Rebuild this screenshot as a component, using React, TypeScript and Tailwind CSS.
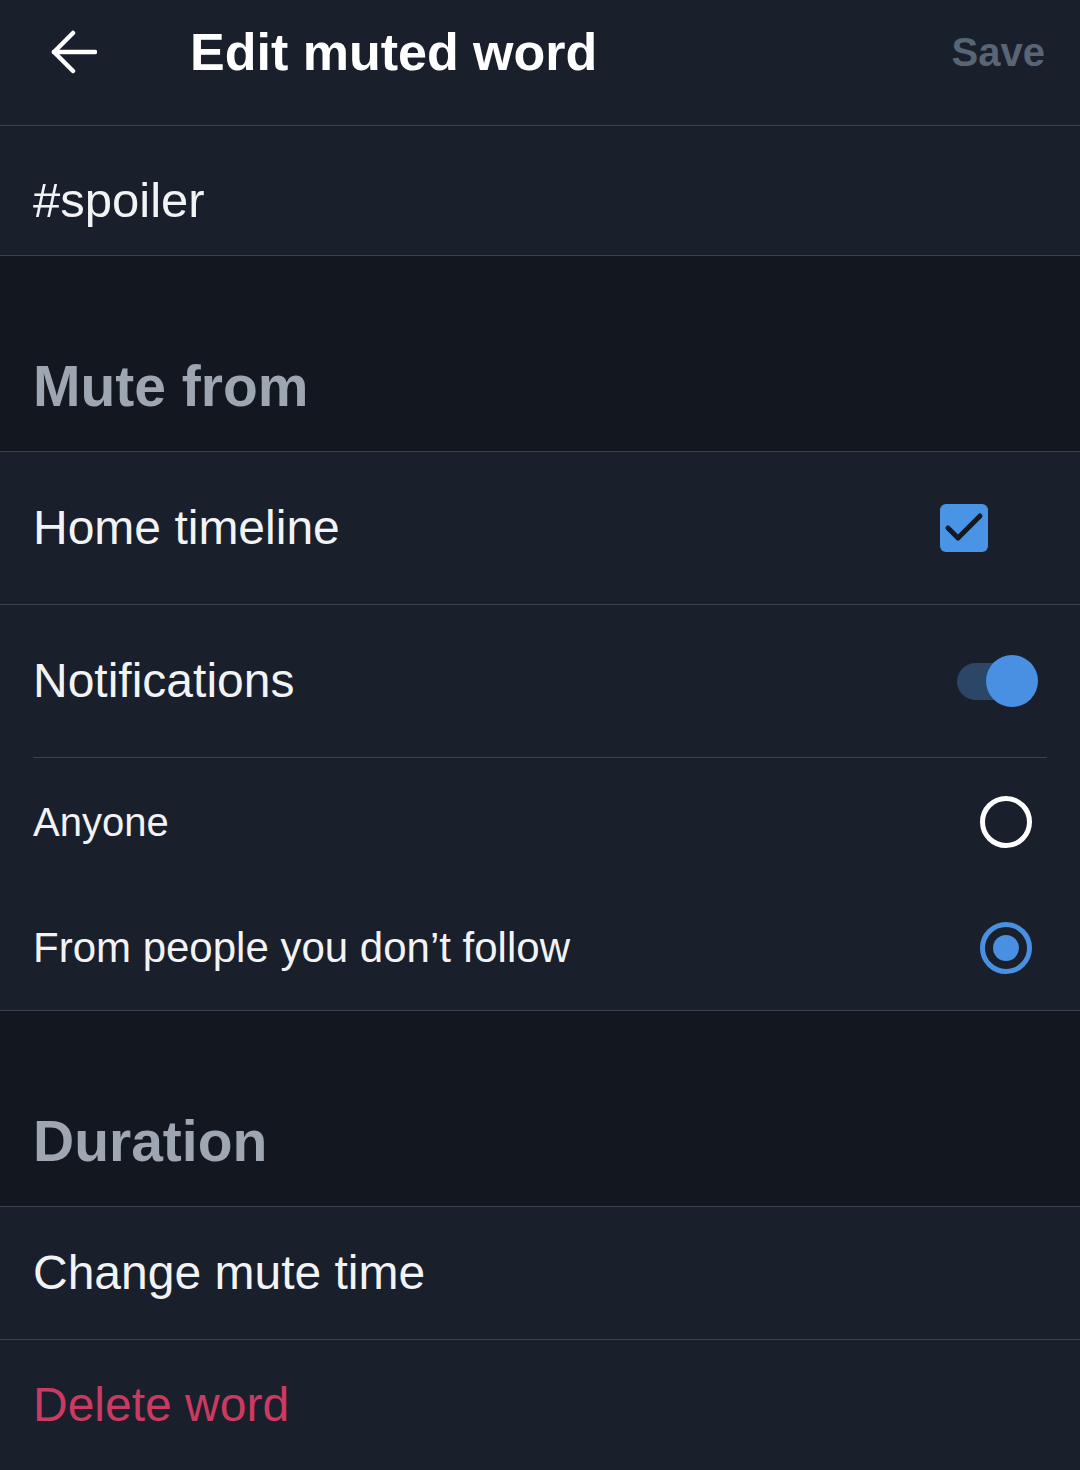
import React from "react";

const font = { fontFamily: '"Liberation Sans", Arial, sans-serif' };

const BackArrow = () => (
  <svg width="46" height="44" viewBox="0 0 46 44" fill="none" stroke="#ffffff" strokeWidth="4.5" strokeLinecap="round" strokeLinejoin="round">
    <path d="M3 22H44" />
    <path d="M22 3L3 22L22 41" />
  </svg>
);

const Checkbox = () => (
  <div className="w-[48px] h-[48px] rounded-[6px] bg-[#4a94e6] flex items-center justify-center">
    <svg width="48" height="48" viewBox="0 0 48 48" fill="none" stroke="#131a25" strokeWidth="5" strokeLinecap="round" strokeLinejoin="round">
      <path d="M8 24L18 34L40 12" />
    </svg>
  </div>
);

const Toggle = () => (
  <div className="relative w-[81px] h-[52px]">
    <div className="absolute left-0 top-[8px] w-[64px] h-[37px] rounded-full bg-[#2b4667]" />
    <div className="absolute right-0 top-0 w-[52px] h-[52px] rounded-full bg-[#4a90e2]" />
  </div>
);

const Radio = ({ checked }: { checked?: boolean }) =>
  checked ? (
    <div className="w-[52px] h-[52px] rounded-full border-[5px] border-[#4a90e2] flex items-center justify-center">
      <div className="w-[26px] h-[26px] rounded-full bg-[#4a90e2]" />
    </div>
  ) : (
    <div className="w-[52px] h-[52px] rounded-full border-[5px] border-white" />
  );

const SectionHeader = ({ title }: { title: string }) => (
  <div className="h-[196px] bg-[#13171f] border-b border-[#3b424d] flex items-end pb-[33px] px-[33px]">
    <h2 className="text-[57px] leading-[64px] font-bold text-[#9ea7b1]">{title}</h2>
  </div>
);

export default function App() {
  return (
    <div className="w-[1080px] h-[1470px] bg-[#1a1f2c] text-[#f1f3f5] overflow-hidden" style={font}>
      {/* top bar */}
      <header className="h-[126px] border-b border-[#3b424d] flex items-center pb-[21px] pl-[51px] pr-[35px]">
        <BackArrow />
        <h1 className="ml-[93px] text-[52px] leading-[60px] font-bold text-white">Edit muted word</h1>
        <button className="ml-auto text-[40px] leading-[48px] font-bold text-[#586575]">Save</button>
      </header>

      <div className="h-[130px] border-b border-[#3b424d] flex items-center pt-[19px] px-[33px]">
        <span className="text-[49px] leading-[56px]">#spoiler</span>
      </div>

      <SectionHeader title="Mute from" />

      <div className="h-[153px] border-b border-[#3b424d] flex items-center justify-between pl-[33px] pr-[92px]">
        <span className="text-[48px] leading-[56px]">Home timeline</span>
        <Checkbox />
      </div>

      <div className="h-[152px] flex items-center justify-between pl-[33px] pr-[42px]">
        <span className="text-[48px] leading-[56px]">Notifications</span>
        <Toggle />
      </div>
      <div className="h-px mx-[33px] bg-[#3b424d]" />

      <div className="h-[127px] flex items-center justify-between pl-[33px] pr-[48px]">
        <span className="text-[40px] leading-[48px]">Anyone</span>
        <Radio />
      </div>
      <div className="h-[126px] border-b border-[#3b424d] flex items-center justify-between pl-[33px] pr-[48px]">
        <span className="text-[42px] leading-[50px]">From people you don’t follow</span>
        <Radio checked />
      </div>

      <SectionHeader title="Duration" />

      <div className="h-[133px] border-b border-[#3b424d] flex items-center px-[33px]">
        <span className="text-[48px] leading-[56px]">Change mute time</span>
      </div>
      <div className="h-[130px] flex items-center px-[33px]">
        <span className="text-[48px] leading-[56px] text-[#cb3a61]">Delete word</span>
      </div>
    </div>
  );
}
